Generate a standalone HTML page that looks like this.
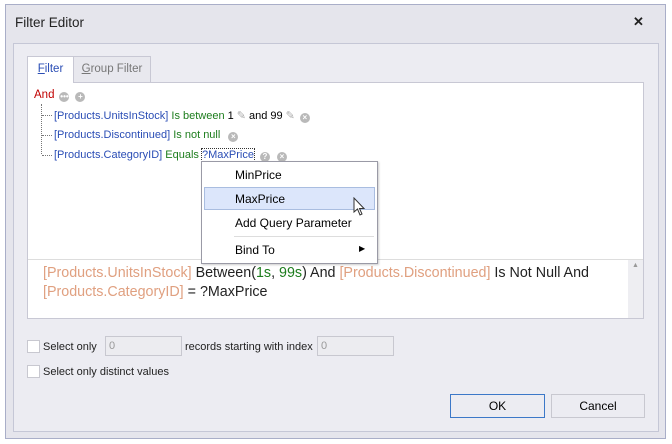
<!DOCTYPE html>
<html><head><style>
*{box-sizing:border-box;margin:0;padding:0}
body{width:672px;height:444px;background:#fff;font-family:"Liberation Sans",sans-serif;font-size:12px;position:relative;overflow:hidden}
.abs{position:absolute}
.win{left:5px;top:4px;width:661px;height:435px;border:1px solid #a9aec8;background:#e5e5ec}
.panel{left:13px;top:43px;width:646px;height:389px;border:1px solid #c5c7d6;background:#ececf2}
.box{left:27px;top:82px;width:617px;height:237px;border:1px solid #c8c8d4;background:#fff}
.tab{top:56px;height:27px;border:1px solid #c8c8d4;border-bottom:none;font-size:11.5px;line-height:25px;text-align:center}
.t{position:absolute;white-space:nowrap;font-size:11px}
.b{color:#2a4db5}.g{color:#1d7d1d}.o{color:#e0a080}
.ic{display:inline-block;vertical-align:-1px;width:10px;height:10px;border-radius:50%;background:#b9b9b9;color:#fff;font-size:8px;line-height:10px;text-align:center;font-weight:bold;margin-left:4px}
.pen{color:#aaa;margin:0 3px}
.dot{position:absolute;border-left:1px dotted #777}
.hd{position:absolute;border-top:1px dotted #777;width:10px}
.menu{left:201px;top:161px;width:177px;height:103px;border:1px solid #9a9aa6;background:#fff;box-shadow:1px 1px 2px rgba(0,0,0,.2)}
.cb{position:absolute;width:13px;height:13px;border:1px solid #c8c8d0;background:#fff}
.inp{position:absolute;height:20px;border:1px solid #c8c8d0;background:#ececf0;color:#999;padding-left:3px;line-height:18px;font-size:11px}
.btn{position:absolute;height:24px;border:1px solid #c8c8d0;background:#ececf2;text-align:center;line-height:22px}
</style></head><body>
<div class="abs win"></div>
<div class="t" style="left:15px;top:15px;font-size:13.5px;color:#222">Filter Editor</div>
<div class="t" style="left:633px;top:14px;font-size:13px;color:#222;font-weight:bold">✕</div>
<div class="abs panel"></div>
<div class="abs tab" style="left:27px;width:47px;background:#fff;color:#2a4db5;height:27px;z-index:2"><u>F</u>ilter</div>
<div class="abs tab" style="left:73px;width:78px;background:#e8e8ee;color:#777"><u>G</u>roup Filter</div>
<div class="abs box"></div>
<div class="t" style="left:34px;top:89px;color:#c00000;font-size:11.5px">And<span class="ic" style="margin-left:5px">•••</span><span class="ic" style="margin-left:6px">+</span></div>
<div class="dot" style="left:41px;top:104px;height:50px"></div>
<div class="hd" style="left:42px;top:115px"></div>
<div class="hd" style="left:42px;top:135px"></div>
<div class="hd" style="left:42px;top:155px"></div>
<div class="t" style="left:54px;top:109px"><span class="b">[Products.UnitsInStock]</span> <span class="g">Is between</span> 1<span class="pen">✎</span>and 99<span class="pen">✎</span><span class="ic" style="margin-left:2px">×</span></div>
<div class="t" style="left:54px;top:129px"><span class="b">[Products.Discontinued]</span> <span class="g">Is not null</span><span class="ic" style="margin-left:8px">×</span></div>
<div class="t" style="left:54px;top:149px"><span class="b">[Products.CategoryID]</span> <span class="g">Equals</span> <span class="b" style="outline:1px dotted #333">?MaxPrice</span><span class="ic" style="margin-left:6px">?</span><span class="ic" style="margin-left:7px">×</span></div>
<div class="abs" style="left:28px;top:259px;width:615px;height:1px;background:#ddd"></div>
<div class="abs" style="left:628px;top:260px;width:15px;height:58px;background:#eeeef2"></div>
<div class="t" style="left:632px;top:262px;font-size:7px;color:#999">▲</div>
<div class="t" style="left:43px;top:264px;font-size:14.3px;line-height:19px;color:#222"><span class="o">[Products.UnitsInStock]</span> Between(<span class="g">1s</span>, <span class="g">99s</span>) And <span class="o">[Products.Discontinued]</span> Is Not Null And<br><span class="o">[Products.CategoryID]</span> = ?MaxPrice</div>
<div class="abs menu"></div>
<div class="abs" style="left:204px;top:187px;width:171px;height:23px;background:#dce6fb;border:1px solid #a9bde0"></div>
<div class="t" style="left:235px;top:168px;font-size:12px">MinPrice</div>
<div class="t" style="left:235px;top:192px;font-size:12px">MaxPrice</div>
<div class="t" style="left:235px;top:216px;font-size:12px">Add Query Parameter</div>
<div class="abs" style="left:234px;top:236px;width:140px;height:1px;background:#ddd"></div>
<div class="t" style="left:235px;top:243px;font-size:12px">Bind To</div>
<div class="t" style="left:359px;top:244px;font-size:8px">▶</div>
<svg class="abs" style="left:353px;top:197px" width="14" height="20"><path d="M1 1 L1 15 L4.5 12 L7 18 L9 17 L6.5 11.5 L11 11.5 Z" fill="#fff" stroke="#333"/></svg>
<div class="cb" style="left:27px;top:340px"></div>
<div class="t" style="left:43px;top:341px;color:#222">Select only</div>
<div class="inp" style="left:105px;top:336px;width:77px">0</div>
<div class="t" style="left:185px;top:341px;color:#222">records starting with index</div>
<div class="inp" style="left:317px;top:336px;width:77px">0</div>
<div class="cb" style="left:27px;top:365px"></div>
<div class="t" style="left:43px;top:366px;color:#222">Select only distinct values</div>
<div class="btn" style="left:450px;top:394px;width:95px;border-color:#3c78c8">OK</div>
<div class="btn" style="left:551px;top:394px;width:94px">Cancel</div>
</body></html>
